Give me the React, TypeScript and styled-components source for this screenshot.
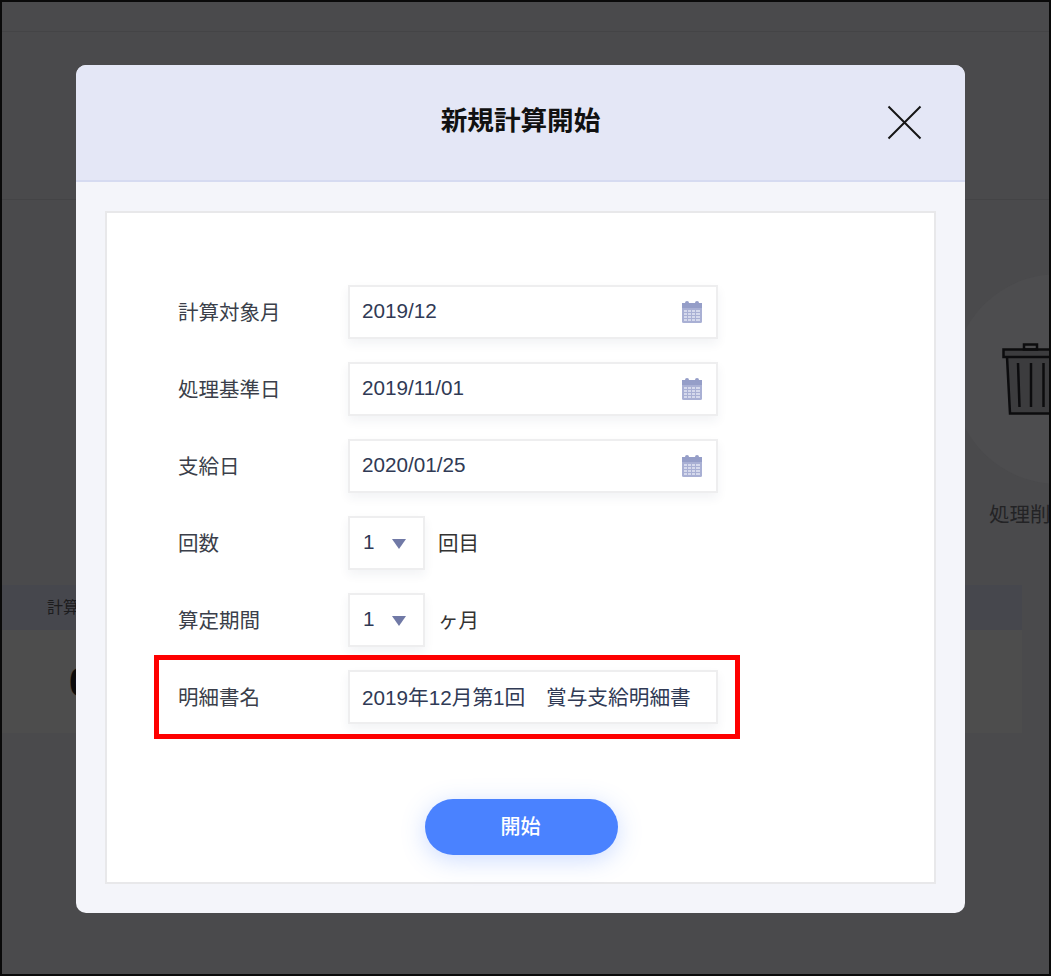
import React from "react";
import styled, { createGlobalStyle } from "styled-components";

const Global = createGlobalStyle`
  html, body { margin: 0; padding: 0; background: #4a4a4c; }
  * { box-sizing: border-box; }
  body { font-family: "Liberation Sans", "Noto Sans CJK JP", sans-serif; }
`;

const Page = styled.div`
  position: relative;
  width: 1051px;
  height: 976px;
  border: 2px solid #0a0a0a;
  background: #4a4a4c;
  overflow: hidden;
`;

const TopBar = styled.div`
  height: 30px;
  border-bottom: 1px solid #444446;
`;

const SubBar = styled.div`
  height: 168px;
  border-bottom: 1px solid #444446;
`;

const Actions = styled.div`
  height: 385px;
  display: flex;
  justify-content: flex-end;
  padding-top: 74px;
  margin-right: -114px;
`;

const Action = styled.div`
  width: 210px;
  display: flex;
  flex-direction: column;
`;

const Circle = styled.div`
  width: 210px;
  height: 210px;
  border-radius: 50%;
  background: #4d4d4f;
  display: flex;
  align-items: center;
  padding-left: 49px;
`;

const ActionLabel = styled.div`
  margin: 17px 0 0 36px;
  font-size: 20.5px;
  line-height: 28px;
  color: #232325;
  white-space: nowrap;
`;

const SummaryTable = styled.div`
  width: 1020px;
  height: 148px;
  background: #4d4d4d;
`;

const SummaryHead = styled.div`
  height: 45px;
  background: #46474d;
  padding-left: 45px;
  font-size: 16px;
  line-height: 45px;
  color: #1c1c1e;
`;

const SummaryBody = styled.div`
  padding-left: 67px;
  font-size: 40px;
  font-weight: 700;
  line-height: 104px;
  color: #0c0c0c;
`;

const Modal = styled.div`
  position: absolute;
  left: 74px;
  top: 63px;
  width: 889px;
  height: 848px;
  border-radius: 10px;
  background: #f4f5fa;
  overflow: hidden;
  display: flex;
  flex-direction: column;
`;

const ModalHeader = styled.header`
  height: 117px;
  flex: none;
  background: #e4e7f6;
  border-bottom: 2px solid #d6dbf1;
  display: flex;
  align-items: center;
  justify-content: center;
  position: relative;
`;

const Title = styled.h1`
  margin: 0 0 3px;
  font-size: 26.6px;
  line-height: 36px;
  font-weight: 700;
  color: #111;
`;

const CloseButton = styled.button`
  position: absolute;
  right: 43px;
  top: 40px;
  width: 35px;
  height: 35px;
  padding: 0;
  border: none;
  background: none;
  display: flex;
`;

const Panel = styled.section`
  margin: 29px;
  flex: 1;
  background: #fff;
  border: 2px solid #e8e8ea;
  padding: 72px 0 0 72px;
  display: flex;
  flex-direction: column;
`;

const Form = styled.div`
  display: flex;
  flex-direction: column;
  gap: 23px;
`;

const Row = styled.div`
  position: relative;
  display: flex;
  align-items: center;
  height: 54px;
`;

const Label = styled.label`
  width: 169px;
  flex: none;
  margin-left: -1px;
  margin-right: 1px;
  font-size: 20.5px;
  color: #3b3f4a;
  padding-bottom: 3px;
`;

const Field = styled.div`
  width: 370px;
  height: 54px;
  background: #fff;
  border: 2px solid #eeeeef;
  box-shadow: 0 5px 10px rgba(40, 50, 90, 0.06);
  display: flex;
  align-items: center;
  justify-content: space-between;
  padding: 0 13px 0 12px;
  font-size: 20.7px;
  color: #303a55;
  white-space: nowrap;
`;

const FieldValue = styled.span`
  padding-bottom: 2px;
`;

const SelectBox = styled(Field)`
  width: 77px;
  padding: 0 17px 0 13px;
`;

const Arrow = styled.span`
  width: 0;
  height: 0;
  border-left: 7px solid transparent;
  border-right: 7px solid transparent;
  border-top: 10px solid #7079a6;
  margin-top: 2px;
`;

const Unit = styled.span`
  margin-left: 13px;
  font-size: 20.5px;
  color: #333;
  padding-bottom: 2px;
`;

const Highlight = styled.div`
  position: absolute;
  left: -25px;
  top: -15px;
  width: 586px;
  height: 84px;
  border: 5px solid #fe0000;
  pointer-events: none;
`;

const Footer = styled.div`
  display: flex;
  justify-content: center;
  margin-top: 75px;
  margin-left: -70px;
`;

const StartButton = styled.button`
  width: 193px;
  height: 56px;
  border: none;
  border-radius: 28px;
  background: #4a82ff;
  box-shadow: 0 5px 24px rgba(74, 130, 255, 0.28);
  color: #fff;
  padding: 0 2px 3px 0;
  font: 500 20px "Liberation Sans", "Noto Sans CJK JP", sans-serif;
`;

const CalendarIcon = () => (
  <svg width="22" height="24" viewBox="0 0 22 24" aria-hidden="true">
    <rect x="1" y="3" width="20" height="20" rx="1.5" fill="#a9b0d4" />
    <rect x="1" y="3" width="20" height="5" fill="#959ec8" />
    <circle cx="6" cy="3" r="2" fill="#959ec8" />
    <circle cx="16" cy="3" r="2" fill="#959ec8" />
    <path d="M3 10h16v11H3z" fill="#d5d9ec" />
    <path
      d="M3 12.5h16M3 15.5h16M3 18.5h16M6.5 10v11M10.5 10v11M14.5 10v11"
      stroke="#a9b0d4"
      strokeWidth="1"
    />
  </svg>
);

const TrashIcon = () => (
  <svg width="96" height="72" viewBox="0 0 96 72" fill="none" stroke="#0c0c0e" strokeWidth="2.5" aria-hidden="true">
    <path d="M5 14l3 56.5h80l3-56.5" fill="#3c3c3e" />
    <rect x="1.5" y="6.5" width="93" height="7.5" fill="#3c3c3e" />
    <rect x="22" y="1.5" width="13" height="5" />
    <path d="M16 20l1.5 44M29 20v44M41.5 20v44M54 20v44M66.5 20v44" />
  </svg>
);

const CloseIcon = () => (
  <svg width="35" height="35" viewBox="0 0 35 35" stroke="#151515" strokeWidth="2" aria-hidden="true">
    <path d="M1.5 1.5l32 32M33.5 1.5l-32 32" />
  </svg>
);

const dateRows = [
  ["計算対象月", "2019/12"],
  ["処理基準日", "2019/11/01"],
  ["支給日", "2020/01/25"],
];

const selectRows = [
  ["回数", "1", "回目"],
  ["算定期間", "1", "ヶ月"],
];

export default function App() {
  return (
    <Page>
      <Global />
      <TopBar />
      <SubBar />
      <Actions>
        <Action>
          <Circle>
            <TrashIcon />
          </Circle>
          <ActionLabel>処理削除</ActionLabel>
        </Action>
      </Actions>
      <SummaryTable>
        <SummaryHead>計算</SummaryHead>
        <SummaryBody>0</SummaryBody>
      </SummaryTable>

      <Modal>
        <ModalHeader>
          <Title>新規計算開始</Title>
          <CloseButton aria-label="閉じる">
            <CloseIcon />
          </CloseButton>
        </ModalHeader>
        <Panel>
          <Form>
            {dateRows.map(([label, value]) => (
              <Row key={label}>
                <Label>{label}</Label>
                <Field>
                  <FieldValue>{value}</FieldValue>
                  <CalendarIcon />
                </Field>
              </Row>
            ))}
            {selectRows.map(([label, value, unit]) => (
              <Row key={label}>
                <Label>{label}</Label>
                <SelectBox>
                  <FieldValue>{value}</FieldValue>
                  <Arrow />
                </SelectBox>
                <Unit>{unit}</Unit>
              </Row>
            ))}
            <Row>
              <Label>明細書名</Label>
              <Field>
                <FieldValue>2019年12月第1回　賞与支給明細書</FieldValue>
              </Field>
              <Highlight />
            </Row>
          </Form>
          <Footer>
            <StartButton>開始</StartButton>
          </Footer>
        </Panel>
      </Modal>
    </Page>
  );
}
